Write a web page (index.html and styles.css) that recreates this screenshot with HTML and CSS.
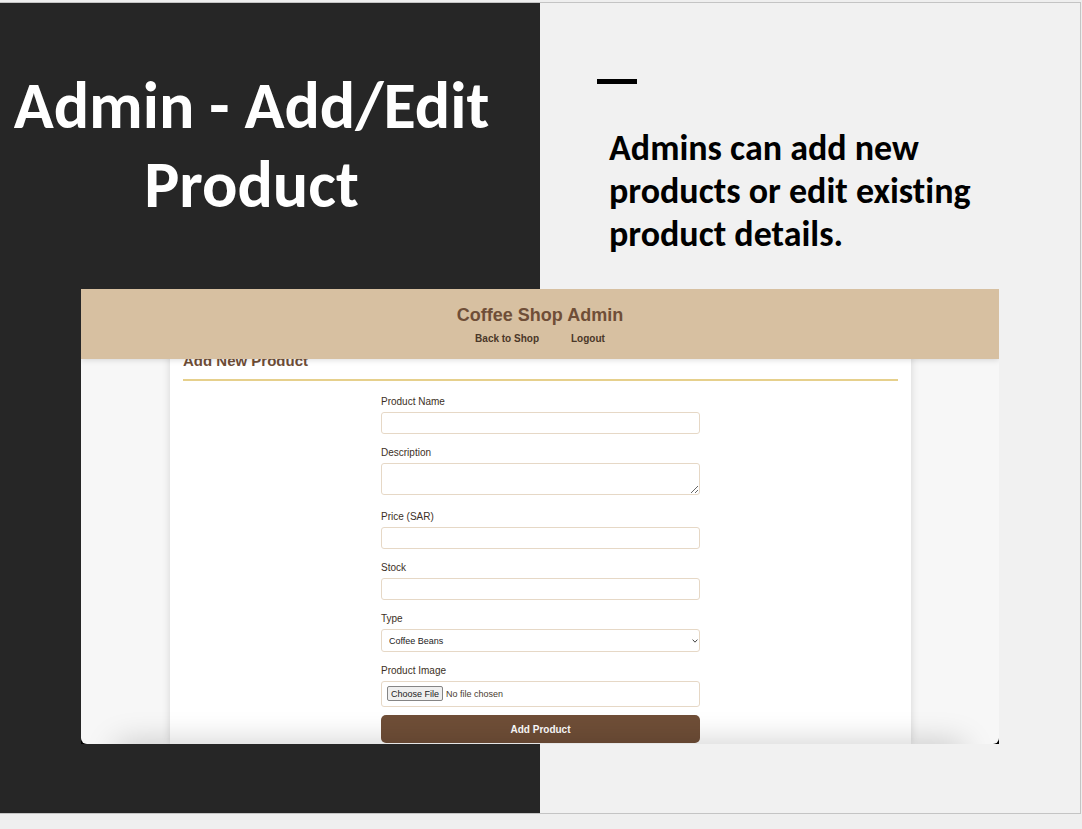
FILE: index.html
```html
<!DOCTYPE html>
<html lang="en">
<head>
<meta charset="utf-8">
<title>Admin - Add/Edit Product</title>
<link rel="stylesheet" href="styles.css">
</head>
<body>
<main class="slide">
  <section class="panel panel-dark">
    <h1 class="slide-title">Admin - Add/Edit Product</h1>
  </section>
  <section class="panel panel-light">
    <div class="accent"></div>
    <p class="slide-text">Admins can add new products or edit existing product details.</p>
  </section>
  <div class="shot">
    <div class="app">
      <header class="app-header">
        <h2 class="app-title">Coffee Shop Admin</h2>
        <nav class="app-nav">
          <a href="#shop">Back to Shop</a>
          <a href="#logout">Logout</a>
        </nav>
      </header>
      <div class="app-body">
        <div class="card">
          <h3 class="card-title">Add New Product</h3>
          <form class="form">
            <div class="field">
              <label for="name">Product Name</label>
              <input class="control" id="name" type="text">
            </div>
            <div class="field field-area">
              <label for="description">Description</label>
              <textarea class="control area" id="description"></textarea>
            </div>
            <div class="field">
              <label for="price">Price (SAR)</label>
              <input class="control" id="price" type="text">
            </div>
            <div class="field">
              <label for="stock">Stock</label>
              <input class="control" id="stock" type="text">
            </div>
            <div class="field">
              <label for="type">Type</label>
              <div class="select-wrap">
                <select class="control select" id="type"><option>Coffee Beans</option></select>
                <svg class="chevron" width="6" height="4" viewBox="0 0 6 4" aria-hidden="true"><path d="M0.6 0.6 3 3.2 5.4 0.6" fill="none" stroke="#444" stroke-width="1"/></svg>
              </div>
            </div>
            <div class="field field-file">
              <label for="image">Product Image</label>
              <input class="control file" id="image" type="file">
            </div>
            <button class="submit" type="submit">Add Product</button>
          </form>
        </div>
      </div>
    </div>
  </div>
</main>
</body>
</html>
```
FILE: styles.css
```css
* { box-sizing: border-box; }

body {
  margin: 0;
  padding: 2px 1px 0 0;
  background: #efefef;
  font-family: "Liberation Sans", Arial, sans-serif;
}

h1, h2, h3, p { margin: 0; }

/* Two half-width panels with the app window laid across both */
.slide {
  display: grid;
  grid-template-columns: 1fr 1fr;
  grid-template-rows: 286px auto 69px;
  border: 1px solid #c4c4c4;
  border-left: 0;
}

.panel { grid-row: 1 / 4; }
.panel-dark {
  grid-column: 1;
  padding: 63px 37px 0 0;
  background: #262626;
}
.panel-light {
  grid-column: 2;
  padding: 76px 80px 0 57px;
  background: #f1f1f1;
}

.slide-title {
  color: #fff;
  font: bold 66px/79px Carlito, "Open Sans", sans-serif;
  text-align: center;
}
.accent {
  width: 40px;
  height: 5px;
  background: #000;
}
.slide-text {
  padding: 43px 0 0 12px;
  color: #000;
  font: bold 36px/43px Carlito, "Open Sans", sans-serif;
  font-variant-ligatures: none;
}

.shot {
  grid-column: 1 / 3;
  grid-row: 2;
  margin: 0 81px;
  background: #000;
}
.app {
  position: relative;
  overflow: hidden;
  border-radius: 0 0 6px 6px;
  background: #f7f7f7;
}
/* soft shade along the window's lower edge */
.app::after {
  content: "";
  position: absolute;
  right: 40px;
  bottom: -24px;
  left: 40px;
  height: 20px;
  box-shadow: 0 0 32px 4px rgba(0, 0, 0, 0.22);
  pointer-events: none;
}

.app-header {
  position: relative;
  z-index: 1;
  padding: 15px 0 12px;
  background: #d7c0a1;
  box-shadow: 0 1px 6px rgba(0, 0, 0, 0.14);
  text-align: center;
}
.app-title {
  color: #6f4e37;
  font-size: 18px;
  line-height: 23px;
}
.app-nav {
  display: flex;
  justify-content: center;
  gap: 32px;
  padding-top: 4px;
  font-size: 10px;
  font-weight: bold;
  line-height: 16px;
}
.app-nav a {
  color: #4a3728;
  text-decoration: none;
}

.app-body { padding: 0 88px 0 89px; }
.card {
  margin-top: -21px;
  padding: 13px 13px 1px;
  background: #fff;
  box-shadow: 0 0 8px rgba(0, 0, 0, 0.14);
}
.card-title {
  padding-bottom: 8px;
  border-bottom: 2px solid #e6d08c;
  color: #6f4e37;
  font-size: 15px;
  line-height: 20px;
}

.form {
  display: flex;
  flex-direction: column;
  gap: 11px;
  max-width: 319px;
  margin: 13px auto 0;
}
.field {
  display: flex;
  flex-direction: column;
  gap: 2px;
  color: #3c2f25;
  font-size: 10px;
  line-height: 16px;
}
.field-area { margin-bottom: 3px; }
.field-file { margin-bottom: -3px; }

.control {
  width: 100%;
  height: 22px;
  margin: 0;
  padding: 4px 6px;
  border: 1px solid #e6d8c6;
  border-radius: 3px;
  background: #fff;
  color: #222;
  font: 9px "Liberation Sans", Arial, sans-serif;
}
.area { height: 32px; resize: vertical; }
.select-wrap {
  display: grid;
  align-items: center;
}
.select {
  grid-area: 1 / 1;
  height: 23px;
  padding: 0 7px;
  appearance: none;
}
.chevron {
  grid-area: 1 / 1;
  justify-self: end;
  margin-right: 2px;
  pointer-events: none;
}
.file {
  height: 26px;
  padding: 4px 5px;
  color: #4a3c30;
}
.file::file-selector-button {
  height: 15px;
  margin: 0 3px 0 0;
  padding: 0 3px;
  border: 1px solid #858585;
  border-radius: 2px;
  background: #efefef;
  color: #222;
  font: 9px "Liberation Sans", Arial, sans-serif;
}
.submit {
  height: 28px;
  padding: 0;
  border: 0;
  border-radius: 5px;
  background: #6f4e37;
  color: #fff;
  font: bold 10px "Liberation Sans", Arial, sans-serif;
}
```
